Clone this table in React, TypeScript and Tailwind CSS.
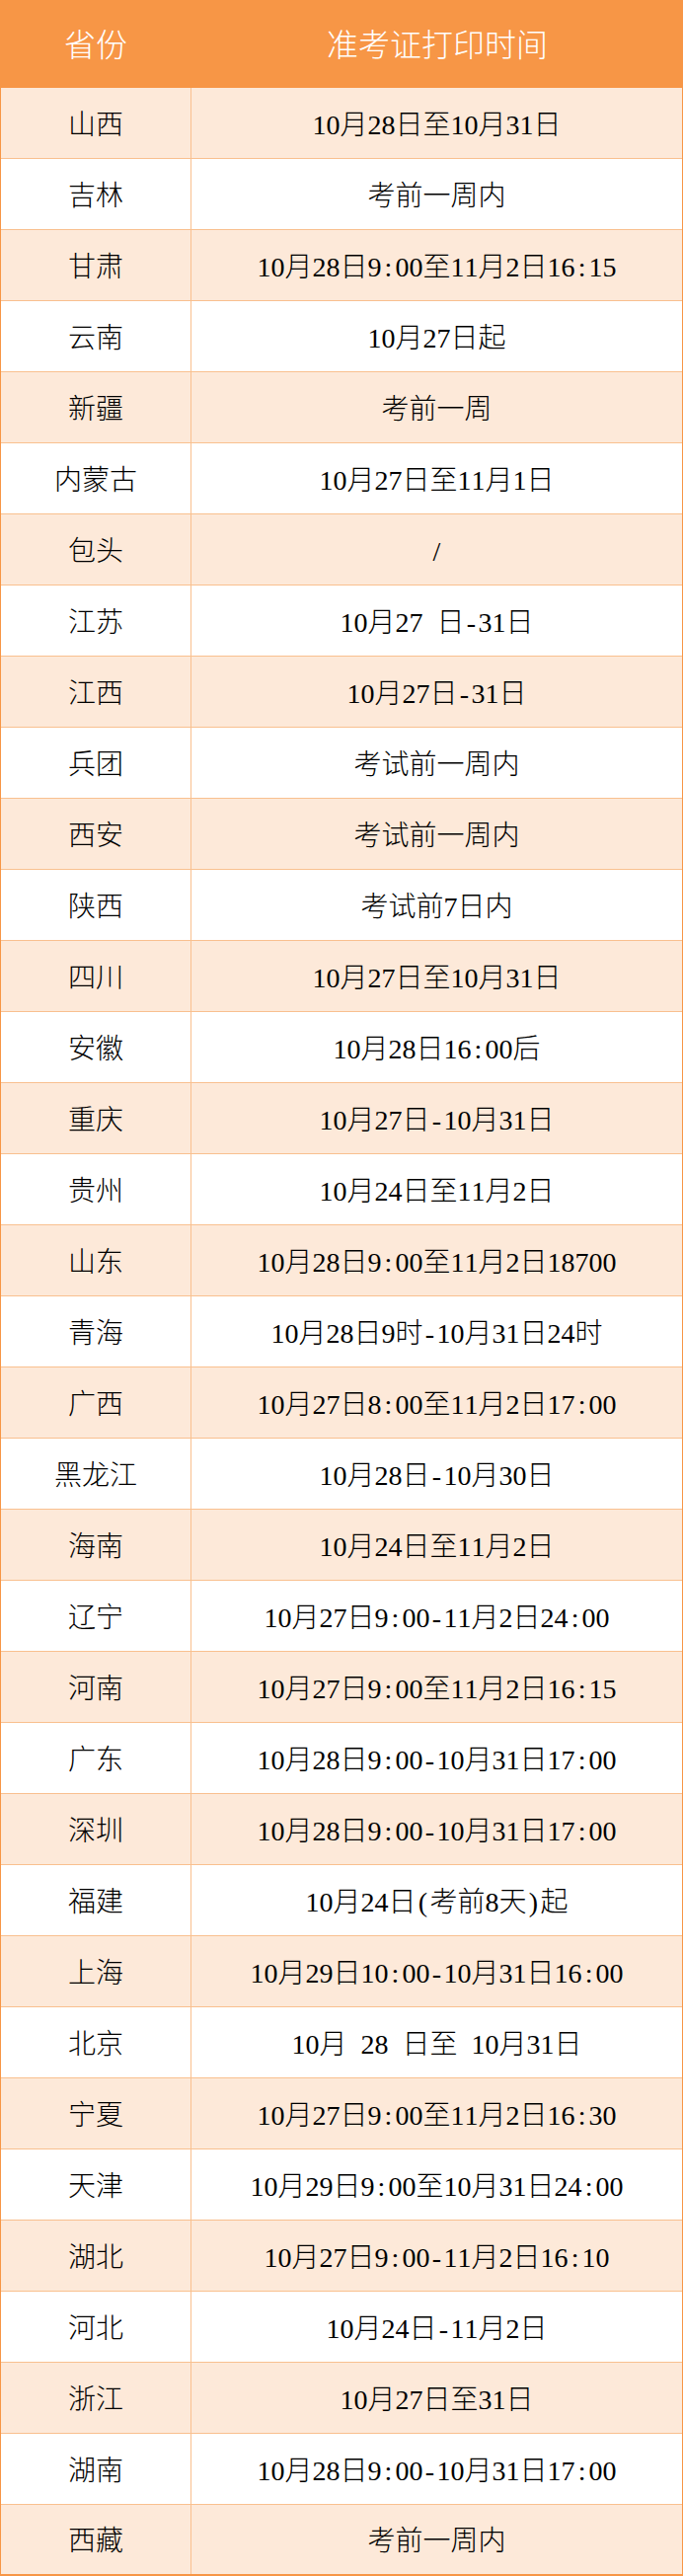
import React from "react";

const rows: [string, string][] = [
  ["山西", "10月28日至10月31日"],
  ["吉林", "考前一周内"],
  ["甘肃", "10月28日9:00至11月2日16:15"],
  ["云南", "10月27日起"],
  ["新疆", "考前一周"],
  ["内蒙古", "10月27日至11月1日"],
  ["包头", "/"],
  ["江苏", "10月27 日-31日"],
  ["江西", "10月27日-31日"],
  ["兵团", "考试前一周内"],
  ["西安", "考试前一周内"],
  ["陕西", "考试前7日内"],
  ["四川", "10月27日至10月31日"],
  ["安徽", "10月28日16:00后"],
  ["重庆", "10月27日-10月31日"],
  ["贵州", "10月24日至11月2日"],
  ["山东", "10月28日9:00至11月2日18700"],
  ["青海", "10月28日9时-10月31日24时"],
  ["广西", "10月27日8:00至11月2日17:00"],
  ["黑龙江", "10月28日-10月30日"],
  ["海南", "10月24日至11月2日"],
  ["辽宁", "10月27日9:00-11月2日24:00"],
  ["河南", "10月27日9:00至11月2日16:15"],
  ["广东", "10月28日9:00-10月31日17:00"],
  ["深圳", "10月28日9:00-10月31日17:00"],
  ["福建", "10月24日(考前8天)起"],
  ["上海", "10月29日10:00-10月31日16:00"],
  ["北京", "10月 28 日至 10月31日"],
  ["宁夏", "10月27日9:00至11月2日16:30"],
  ["天津", "10月29日9:00至10月31日24:00"],
  ["湖北", "10月27日9:00-11月2日16:10"],
  ["河北", "10月24日-11月2日"],
  ["浙江", "10月27日至31日"],
  ["湖南", "10月28日9:00-10月31日17:00"],
  ["西藏", "考前一周内"],
];

const HALF = new Set([":", "-", "/", " ", "(", ")"]);

function Txt({ s }: { s: string }) {
  return (
    <>
      {Array.from(s).map((c, i) =>
        HALF.has(c) ? (
          <span key={i} className="inline-block w-[14px] text-center">
            {c === " " ? "\u00a0" : c}
          </span>
        ) : (
          <span key={i}>{c}</span>
        )
      )}
    </>
  );
}

export default function App() {
  return (
    <div
      className="w-[692px] bg-white font-light"
      style={{ fontFamily: '"Liberation Serif", "Noto Sans CJK SC", serif' }}
    >
      <div className="flex h-[89px] bg-[#F79646] text-white text-[32px] leading-none">
        <div className="w-[194px] flex items-center justify-center pt-[3px]">省份</div>
        <div className="flex-1 flex items-center justify-center pt-[3px]">准考证打印时间</div>
      </div>
      <div className="border-l border-r border-b-2 border-[#F79646]">
        {rows.map(([p, t], i) => (
          <div
            key={p + i}
            className={`flex text-[28px] leading-none text-black ${
              i % 2 === 0 ? "bg-[#FDE9D9]" : "bg-white"
            } ${i === rows.length - 1 ? "h-[70px]" : "h-[72px] border-b border-[#F9C08F]"}`}
          >
            <div className="w-[193px] flex items-center justify-center border-r border-[#F9C08F] pt-[4px] whitespace-nowrap">
              {p}
            </div>
            <div className="flex-1 flex items-center justify-center pt-[4px] whitespace-nowrap">
              <Txt s={t} />
            </div>
          </div>
        ))}
      </div>
    </div>
  );
}
